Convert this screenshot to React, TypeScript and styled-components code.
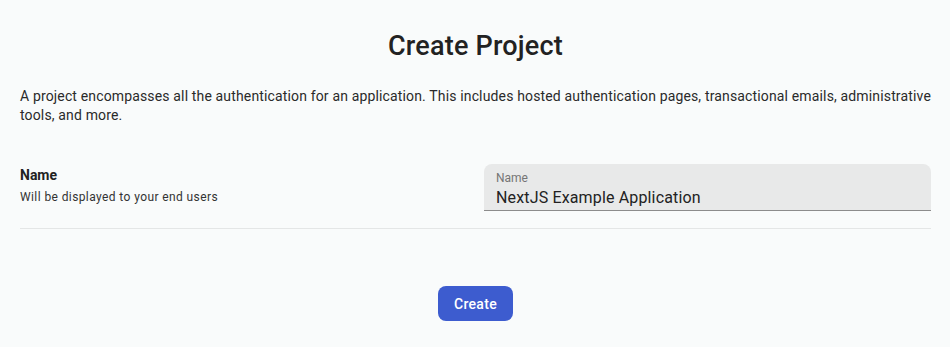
import styled, { createGlobalStyle } from 'styled-components';

const GlobalStyle = createGlobalStyle`
  html, body {
    margin: 0;
    padding: 0;
    background: #f9fbfb;
  }
  body {
    font-family: Roboto, "Liberation Sans", Arial, sans-serif;
    color: #212121;
    -webkit-font-smoothing: antialiased;
  }
`;

const App: React.FC = () => {
  return (
    <>
      <GlobalStyle />
      <Page>
        <Title>Create Project</Title>
        <Description>
          A project encompasses all the authentication for an application. This includes hosted
          authentication pages, transactional emails, administrative tools, and more.
        </Description>

        <FieldRow>
          <FieldInfo>
            <FieldLabel>Name</FieldLabel>
            <FieldHint>Will be displayed to your end users</FieldHint>
          </FieldInfo>
          <TextField>
            <FloatingLabel htmlFor="project-name">Name</FloatingLabel>
            <Input id="project-name" defaultValue="NextJS Example Application" />
          </TextField>
        </FieldRow>

        <Actions>
          <PrimaryButton type="button">Create</PrimaryButton>
        </Actions>
      </Page>
    </>
  );
};

export default App;

const Page = styled.div`
  padding: 30px 19px 0 20px;
`;

const Title = styled.h1`
  margin: 0;
  font-size: 27px;
  line-height: 32px;
  font-weight: 500;
  letter-spacing: 0.2px;
  text-align: center;
  color: #222;
`;

const Description = styled.p`
  margin: 25px 0 0;
  font-size: 14px;
  line-height: 19px;
  letter-spacing: 0.15px;
  color: #2a2a2a;
`;

const FieldRow = styled.div`
  display: flex;
  justify-content: space-between;
  align-items: flex-start;
  margin-top: 39px;
  padding-bottom: 17px;
  border-bottom: 1px solid #e4e6e6;
`;

const FieldInfo = styled.div`
  display: flex;
  flex-direction: column;
  padding-top: 2px;
`;

const FieldLabel = styled.span`
  font-size: 14px;
  line-height: 18px;
  font-weight: 700;
  color: #222;
`;

const FieldHint = styled.span`
  margin-top: 5px;
  font-size: 12px;
  line-height: 16px;
  color: #333;
  letter-spacing: 0.4px;
`;

const TextField = styled.div`
  display: flex;
  flex-direction: column;
  box-sizing: border-box;
  width: 447px;
  height: 47px;
  padding: 7px 12px 0;
  background: #e8e9e9;
  border-radius: 8px 8px 0 0;
  border-bottom: 1px solid #8c8c8c;
`;

const FloatingLabel = styled.label`
  font-size: 12px;
  line-height: 14px;
  color: #757575;
`;

const Input = styled.input`
  margin-top: 3px;
  padding: 0;
  border: 0;
  outline: 0;
  background: transparent;
  font-family: inherit;
  font-size: 16px;
  line-height: 20px;
  height: 20px;
  letter-spacing: 0.15px;
  color: #222;
`;

const Actions = styled.div`
  display: flex;
  justify-content: center;
  margin-top: 57px;
`;

const PrimaryButton = styled.button`
  width: 75px;
  height: 35px;
  border: 0;
  border-radius: 8px;
  background: #3d5ccf;
  color: #fff;
  font-family: inherit;
  font-size: 14px;
  font-weight: 500;
  letter-spacing: 0.3px;
  cursor: pointer;
`;
